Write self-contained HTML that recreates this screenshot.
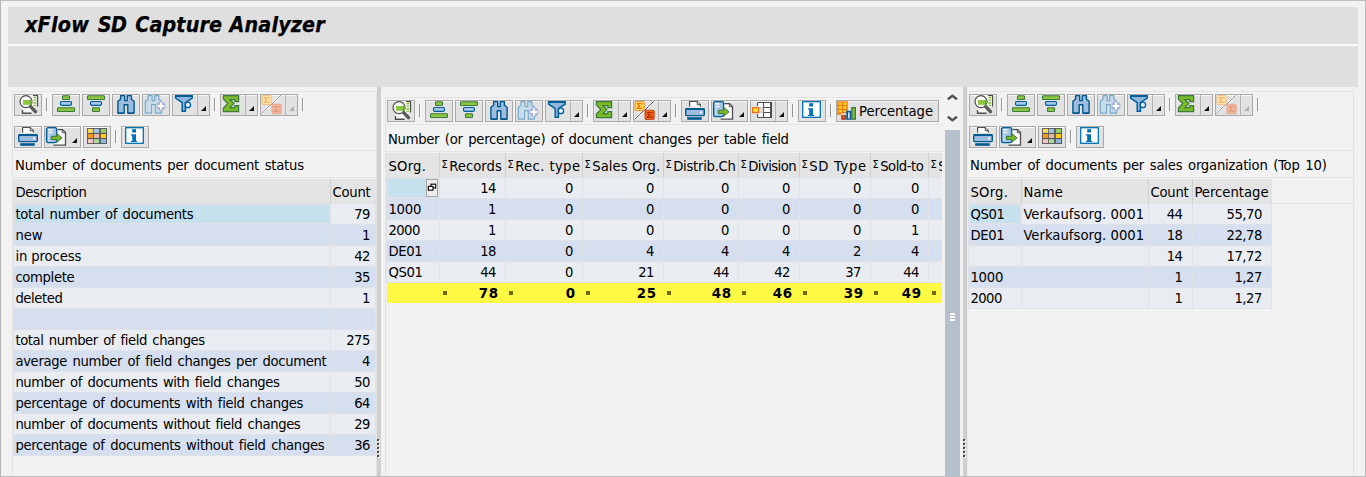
<!DOCTYPE html>
<html lang="en"><head><meta charset="utf-8"><title>xFlow SD Capture Analyzer</title>
<style>
html,body{margin:0;padding:0;background:#f2f2f2;}
body{width:1366px;height:477px;position:relative;overflow:hidden;font-family:"DejaVu Sans Condensed","Liberation Sans",sans-serif;font-size:14.67px;color:#000;}
body>div,body>svg{position:absolute;}
.t{white-space:nowrap;font-size:14.67px;}
.title{font-size:21.33px;font-weight:bold;font-style:italic;-webkit-text-stroke:0.25px #000;}
.btn{background:#e2e2e2;border:1px solid #a9a9a9;box-shadow:inset 0 1px 0 #f8f8f8;}
.sg{font-size:11px;position:absolute;left:1.4px;top:-1px;text-indent:0;letter-spacing:0;}
.b{font-weight:bold;}
.ttl{}
.pct{letter-spacing:-0.2px;}
</style></head><body>
<div style="left:0;top:0;width:1366px;height:477px;background:#f2f2f2"></div>
<div style="left:0px;top:0px;width:1366px;height:1px;background:#bdbdbd;"></div>
<div style="left:0px;top:476px;width:1366px;height:1px;background:#bdbdbd;"></div>
<div style="left:0px;top:0px;width:1px;height:477px;background:#b6b6b6;"></div>
<div style="left:1365px;top:0px;width:1px;height:477px;background:#bbbbbb;"></div>
<div style="left:8px;top:7px;width:1350px;height:37px;background:#dfdfdf;"></div>
<div style="left:8px;top:44px;width:1350px;height:2px;background:#fcfcfc;"></div>
<div style="left:8px;top:46px;width:1350px;height:41px;background:#dfdfdf;"></div>
<div class="t title" style="left:0px;top:10px;width:400px;height:30px;line-height:30px"><span style="position:absolute;left:25.0px;top:0;letter-spacing:0.24px">xFlow</span> <span style="position:absolute;left:97.7px;top:0;letter-spacing:-0.6px">SD</span> <span style="position:absolute;left:135.3px;top:0;letter-spacing:0.1px">Capture</span> <span style="position:absolute;left:229.5px;top:0;letter-spacing:0.15px">Analyzer</span></div>
<div style="left:12px;top:91px;width:365px;height:1px;background:#e3e3e3;"></div>
<div style="left:12px;top:91px;width:1px;height:385px;background:#e3e3e3;"></div>
<div style="left:376px;top:91px;width:1px;height:385px;background:#e3e3e3;"></div>
<div class="btn" style="left:14px;top:94px;width:26px;height:20px"></div>
<svg style="left:14px;top:94px" width="28" height="22" viewBox="0 0 28 22">
<path d="M14,1.5h9.5v11h-6v6.5h-9v-4z" fill="#f7f7f7"/>
<path d="M19,1.5h4.5v11" fill="none" stroke="#4d4d4d" stroke-width="1.2"/>
<rect x="19.5" y="2.6" width="2.6" height="1.8" fill="#8cc63f"/><rect x="19.5" y="5.6" width="2.6" height="1.2" fill="#8cc63f"/><rect x="19.5" y="8" width="2.6" height="1.8" fill="#8cc63f"/><rect x="19.5" y="10.8" width="2.6" height="1.2" fill="#8cc63f"/>
<path d="M8.5,16v3.2h9" fill="none" stroke="#4d4d4d" stroke-width="1.4"/>
<circle cx="12" cy="7.6" r="6" fill="#fff" stroke="#4d4d4d" stroke-width="1.2"/>
<rect x="9" y="6" width="8.6" height="4.8" fill="#8cc63f"/>
<rect x="16" y="6" width="1.6" height="4.8" fill="#6aa83a"/>
<path d="M16.6,12.6l4.9,5" stroke="#5a5a5a" stroke-width="3.4" stroke-linecap="round"/>
</svg>
<div style="left:46px;top:98px;width:1px;height:13px;background:#949494;"></div>
<div style="left:47px;top:98px;width:1px;height:13px;background:#fafafa;"></div>
<div class="btn" style="left:52px;top:94px;width:26px;height:20px"></div>
<svg style="left:52px;top:94px" width="28" height="22" viewBox="0 0 28 22">
<rect x="10.5" y="1.7" width="7" height="3.8" rx="0.8" fill="#8cc63f" stroke="#3a7a3c" stroke-width="1.1"/>
<rect x="8.5" y="7.5" width="11" height="3.8" rx="1.2" fill="#a9c7e6" stroke="#005d96" stroke-width="1.2"/>
<rect x="5.5" y="13.7" width="17" height="3.8" rx="0.8" fill="#8cc63f" stroke="#3a7a3c" stroke-width="1.1"/>
</svg>
<div class="btn" style="left:82px;top:94px;width:26px;height:20px"></div>
<svg style="left:82px;top:94px" width="28" height="22" viewBox="0 0 28 22">
<rect x="5.5" y="1.7" width="17" height="3.8" rx="0.8" fill="#8cc63f" stroke="#3a7a3c" stroke-width="1.1"/>
<rect x="8.5" y="7.5" width="11" height="3.8" rx="1.2" fill="#a9c7e6" stroke="#005d96" stroke-width="1.2"/>
<rect x="10.5" y="13.7" width="7" height="3.8" rx="0.8" fill="#8cc63f" stroke="#3a7a3c" stroke-width="1.1"/>
</svg>
<div class="btn" style="left:112px;top:94px;width:26px;height:20px"></div>
<svg style="left:112px;top:94px" width="28" height="22" viewBox="0 0 28 22"><path d="M8.6,1.6h4.1v5h2.6v-5h4.1v3.6l2.7,2v11.9h-6.3v-8.4h-3.6v8.4h-6.3v-11.9l2.7,-2z" fill="#9cbde0" stroke="#00568c" stroke-width="1.4" stroke-linejoin="round"/><path d="M5.9,19.2h6.3M15.8,19.2h6.3" stroke="#00568c" stroke-width="1.6"/></svg>
<div class="btn" style="left:142px;top:94px;width:26px;height:20px"></div>
<svg style="left:142px;top:94px" width="28" height="22" viewBox="0 0 28 22"><g transform="translate(-2.6,0)"><path d="M8.6,1.6h4.1v5h2.6v-5h4.1v3.6l2.7,2v11.9h-6.3v-8.4h-3.6v8.4h-6.3v-11.9l2.7,-2z" fill="#c7dbeb" stroke="#76aacb" stroke-width="1.2" stroke-linejoin="round"/></g><circle cx="19" cy="12" r="4.6" fill="#a9b3d8"/><path d="M19,8.6v6.8M15.6,12h6.8" stroke="#fff" stroke-width="2"/></svg>
<div class="btn" style="left:172px;top:94px;width:36px;height:20px"></div>
<div style="left:197px;top:95px;width:1px;height:20px;background:#b4b4b4;"></div>
<svg style="left:172px;top:94px" width="28" height="22" viewBox="0 0 28 22">
<path d="M3.6,1.8h16.6v2.4l-6.8,4.4v8.6h-3.2v-8.6l-6.6,-4.4z" fill="#92b6dc" stroke="#00609a" stroke-width="1.5" stroke-linejoin="miter"/>
<path d="M3.4,2h16.6" stroke="#00609a" stroke-width="2"/>
<circle cx="15.9" cy="10.9" r="2.7" fill="#e8eef4" stroke="#00609a" stroke-width="1.3"/>
</svg>
<svg style="left:201px;top:106px" width="5" height="5" viewBox="0 0 5 5"><path d="M5,0V5H0Z" fill="#111"/></svg>
<div style="left:214px;top:98px;width:1px;height:13px;background:#949494;"></div>
<div style="left:215px;top:98px;width:1px;height:13px;background:#fafafa;"></div>
<div class="btn" style="left:220px;top:94px;width:36px;height:20px"></div>
<div style="left:245px;top:95px;width:1px;height:20px;background:#b4b4b4;"></div>
<svg style="left:220px;top:94px" width="28" height="22" viewBox="0 0 28 22"><g transform="translate(3.4,1.6) scale(0.95,1)"><path d="M0,0H16V6H12V4H7L11,8L7,12H12V10H16V16H0V12.5L4.5,8L0,3.5Z" fill="#7ab929" stroke="#3a7a3c" stroke-width="1.3" stroke-linejoin="miter"/></g></svg>
<svg style="left:249px;top:106px" width="5" height="5" viewBox="0 0 5 5"><path d="M5,0V5H0Z" fill="#111"/></svg>
<div class="btn" style="left:260px;top:94px;width:36px;height:20px"></div>
<div style="left:285px;top:95px;width:1px;height:20px;background:#b4b4b4;"></div>
<svg style="left:260px;top:94px" width="28" height="22" viewBox="0 0 28 22"><path d="M1.5,19.5C6,16 7,13 10.5,11S16,5 21,1.2" fill="none" stroke="#fff" stroke-width="2.2"/>
<path d="M1.5,19.5C6,16 7,13 10.5,11S16,5 21,1.2" fill="none" stroke="#777" stroke-width="0.9"/>
<rect x="2" y="1.4" width="9.2" height="9.2" rx="1" fill="#fbe7a0" stroke="#f2b27a" stroke-width="0.8"/>
<g transform="translate(2.1,1.4)"><path d="M1.6,1.6H7.4V3.4H6.4V2.8H3.6L5.6,4.6L3.6,6.4H6.4V5.8H7.4V7.6H1.6V6.6L3.6,4.6L1.6,2.6Z" fill="#f2b27a"/></g>
<rect x="12" y="10.2" width="9.2" height="9.4" rx="1" fill="#f0b9a0" stroke="#e59a80" stroke-width="0.8"/>
<g transform="translate(12.1,10.3)"><path d="M1.6,1.6H7.4V3.4H6.4V2.8H3.6L5.6,4.6L3.6,6.4H6.4V5.8H7.4V7.6H1.6V6.6L3.6,4.6L1.6,2.6Z" fill="#e59a80"/></g></svg>
<svg style="left:289px;top:106px" width="5" height="5" viewBox="0 0 5 5"><path d="M5,0V5H0Z" fill="#b0b0b0"/></svg>
<div style="left:302px;top:98px;width:1px;height:13px;background:#949494;"></div>
<div style="left:303px;top:98px;width:1px;height:13px;background:#fafafa;"></div>
<div class="btn" style="left:14px;top:126px;width:26px;height:20px"></div>
<svg style="left:14px;top:126px" width="28" height="22" viewBox="0 0 28 22">
<path d="M8.6,6.4v-4.9h7.6l3.2,3.2v1.7" fill="#fff" stroke="#4d4d4d" stroke-width="1.2"/>
<path d="M16.2,1.5v3.2h3.2" fill="#ddd" stroke="#4d4d4d" stroke-width="1"/>
<rect x="4.7" y="8.6" width="18.6" height="7" rx="1.2" fill="#9dbcdd" stroke="#005a8f" stroke-width="1.4"/>
<rect x="4.7" y="8" width="18.6" height="2" fill="#005a8f"/>
<rect x="19.2" y="11.4" width="2" height="2" fill="#fff"/>
<rect x="6.2" y="17.2" width="14.6" height="2.6" fill="#005a8f"/>
</svg>
<div class="btn" style="left:44px;top:126px;width:35px;height:20px"></div>
<svg style="left:44px;top:126px" width="28" height="22" viewBox="0 0 28 22">
<path d="M13.5,3.6h5l3,3v12.6h-12" fill="#fff" stroke="#4d4d4d" stroke-width="1.3"/>
<path d="M18.3,3.6v3.2h3.2" fill="none" stroke="#4d4d4d" stroke-width="1"/>
<rect x="2.6" y="1.6" width="10" height="15" rx="1.5" fill="#a6c4e4" stroke="#00609a" stroke-width="1.4"/>
<rect x="4" y="3.2" width="4.4" height="1.4" fill="#fff"/><rect x="4" y="6" width="4.4" height="1.2" fill="#fff"/>
<rect x="4" y="8" width="1.6" height="7.6" fill="#c6d9ee"/>
<path d="M7.4,10.3h5.4v-2.8l5.2,4.4l-5.2,4.4v-2.8h-5.4z" fill="#7ab929" stroke="#3a7a3c" stroke-width="1"/>
</svg>
<svg style="left:72px;top:138px" width="5" height="5" viewBox="0 0 5 5"><path d="M5,0V5H0Z" fill="#111"/></svg>
<div class="btn" style="left:83px;top:126px;width:26px;height:20px"></div>
<svg style="left:83px;top:126px" width="28" height="22" viewBox="0 0 28 22"><rect x="4" y="2" width="20" height="16" rx="0.6" fill="#565656"/><rect x="4.9" y="2.9" width="5.2" height="4" fill="#ffd95a"/><rect x="10.9" y="2.9" width="5.2" height="4" fill="#a3c4e6"/><rect x="17.8" y="2.9" width="5.2" height="4" fill="#9bcf63"/><rect x="4.9" y="8" width="5.2" height="4" fill="#f39a1e"/><rect x="10.9" y="8" width="5.2" height="4" fill="#e3b8a8"/><rect x="17.8" y="8" width="5.2" height="4" fill="#ffcc12"/><rect x="4.9" y="13.1" width="5.2" height="4" fill="#f7c6c6"/><rect x="10.9" y="13.1" width="5.2" height="4" fill="#acd89c"/><rect x="17.8" y="13.1" width="5.2" height="4" fill="#8fb8e0"/></svg>
<div style="left:115px;top:130px;width:1px;height:13px;background:#949494;"></div>
<div style="left:116px;top:130px;width:1px;height:13px;background:#fafafa;"></div>
<div class="btn" style="left:121px;top:126px;width:26px;height:20px"></div>
<svg style="left:121px;top:126px" width="28" height="22" viewBox="0 0 28 22">
<rect x="4.7" y="1.7" width="17.6" height="15.6" fill="#fff" stroke="#0070b8" stroke-width="1.3"/>
<rect x="11.2" y="3.2" width="3.8" height="3.3" fill="#0070b8"/>
<path d="M9.9,8.2h5.1v6.8h1.2v1.1h-6.3v-1.1h1.3v-5.6h-1.3z" fill="#0070b8"/>
</svg>
<div style="left:13px;top:150px;width:363px;height:1px;background:#e3e3e3;"></div>
<div style="left:13px;top:177px;width:363px;height:1px;background:#e3e3e3;"></div>
<div class="t ttl" style="left:15px;top:153px;width:360px;height:23px;line-height:23px;letter-spacing:-0.221px;word-spacing:1.7px;">Number of documents per document status</div>
<div style="left:377px;top:87px;width:4px;height:389px;background:#cfcfcf;"></div>
<div style="left:378px;top:440px;width:2px;height:2px;background:#ffffff;"></div>
<div style="left:377px;top:439px;width:2px;height:2px;background:#4a4a4a;"></div>
<div style="left:378px;top:444px;width:2px;height:2px;background:#ffffff;"></div>
<div style="left:377px;top:443px;width:2px;height:2px;background:#4a4a4a;"></div>
<div style="left:378px;top:448px;width:2px;height:2px;background:#ffffff;"></div>
<div style="left:377px;top:447px;width:2px;height:2px;background:#4a4a4a;"></div>
<div style="left:378px;top:452px;width:2px;height:2px;background:#ffffff;"></div>
<div style="left:377px;top:451px;width:2px;height:2px;background:#4a4a4a;"></div>
<div style="left:378px;top:456px;width:2px;height:2px;background:#ffffff;"></div>
<div style="left:377px;top:455px;width:2px;height:2px;background:#4a4a4a;"></div>
<div style="left:963px;top:87px;width:4px;height:389px;background:#cfcfcf;"></div>
<div style="left:964px;top:440px;width:2px;height:2px;background:#ffffff;"></div>
<div style="left:963px;top:439px;width:2px;height:2px;background:#4a4a4a;"></div>
<div style="left:964px;top:444px;width:2px;height:2px;background:#ffffff;"></div>
<div style="left:963px;top:443px;width:2px;height:2px;background:#4a4a4a;"></div>
<div style="left:964px;top:448px;width:2px;height:2px;background:#ffffff;"></div>
<div style="left:963px;top:447px;width:2px;height:2px;background:#4a4a4a;"></div>
<div style="left:964px;top:452px;width:2px;height:2px;background:#ffffff;"></div>
<div style="left:963px;top:451px;width:2px;height:2px;background:#4a4a4a;"></div>
<div style="left:964px;top:456px;width:2px;height:2px;background:#ffffff;"></div>
<div style="left:963px;top:455px;width:2px;height:2px;background:#4a4a4a;"></div>
<div style="left:13px;top:179px;width:363px;height:24px;background:#e4e4e4;"></div>
<div class="t " style="left:15.4px;top:179px;width:314px;height:24px;line-height:24px;line-height:25px;overflow:hidden;letter-spacing:-0.364px;">Description</div>
<div style="left:330px;top:179px;width:1px;height:24px;background:#cfcfcf;"></div>
<div class="t " style="left:332.4px;top:179px;width:42px;height:24px;line-height:24px;line-height:25px;overflow:hidden;letter-spacing:-0.198px;">Count</div>
<div style="left:13px;top:203px;width:363px;height:253px;background:#dee1e5;"></div>
<div style="left:15px;top:205px;width:314px;height:18px;background:#c6e0ee;"></div>
<div class="t " style="left:15.4px;top:204px;width:314px;height:20px;line-height:20px;overflow:hidden;letter-spacing:-0.3px;word-spacing:1.7px;">total number of documents</div>
<div style="left:331px;top:204px;width:44px;height:20px;background:#e9ecf0;"></div>
<div class="t " style="left:331px;top:204px;width:39px;height:20px;line-height:20px;text-align:right;overflow:hidden;letter-spacing:-0.45px;">79</div>
<div style="left:14px;top:225px;width:316px;height:20px;background:#d5dfef;"></div>
<div class="t " style="left:15.4px;top:225px;width:314px;height:20px;line-height:20px;overflow:hidden;letter-spacing:-0.087px;">new</div>
<div style="left:331px;top:225px;width:44px;height:20px;background:#d5dfef;"></div>
<div class="t " style="left:331px;top:225px;width:39px;height:20px;line-height:20px;text-align:right;overflow:hidden;letter-spacing:-0.45px;">1</div>
<div style="left:14px;top:246px;width:316px;height:20px;background:#e9ecf0;"></div>
<div class="t " style="left:15.4px;top:246px;width:314px;height:20px;line-height:20px;overflow:hidden;letter-spacing:-0.097px;">in process</div>
<div style="left:331px;top:246px;width:44px;height:20px;background:#e9ecf0;"></div>
<div class="t " style="left:331px;top:246px;width:39px;height:20px;line-height:20px;text-align:right;overflow:hidden;letter-spacing:-0.45px;">42</div>
<div style="left:14px;top:267px;width:316px;height:20px;background:#d5dfef;"></div>
<div class="t " style="left:15.4px;top:267px;width:314px;height:20px;line-height:20px;overflow:hidden;letter-spacing:-0.34px;">complete</div>
<div style="left:331px;top:267px;width:44px;height:20px;background:#d5dfef;"></div>
<div class="t " style="left:331px;top:267px;width:39px;height:20px;line-height:20px;text-align:right;overflow:hidden;letter-spacing:-0.45px;">35</div>
<div style="left:14px;top:288px;width:316px;height:20px;background:#e9ecf0;"></div>
<div class="t " style="left:15.4px;top:288px;width:314px;height:20px;line-height:20px;overflow:hidden;letter-spacing:-0.408px;">deleted</div>
<div style="left:331px;top:288px;width:44px;height:20px;background:#e9ecf0;"></div>
<div class="t " style="left:331px;top:288px;width:39px;height:20px;line-height:20px;text-align:right;overflow:hidden;letter-spacing:-0.45px;">1</div>
<div style="left:14px;top:309px;width:316px;height:20px;background:#d5dfef;"></div>
<div style="left:331px;top:309px;width:44px;height:20px;background:#d5dfef;"></div>
<div style="left:14px;top:330px;width:316px;height:20px;background:#e9ecf0;"></div>
<div class="t " style="left:15.4px;top:330px;width:314px;height:20px;line-height:20px;overflow:hidden;letter-spacing:-0.427px;word-spacing:1.7px;">total number of field changes</div>
<div style="left:331px;top:330px;width:44px;height:20px;background:#e9ecf0;"></div>
<div class="t " style="left:331px;top:330px;width:39px;height:20px;line-height:20px;text-align:right;overflow:hidden;letter-spacing:-0.45px;">275</div>
<div style="left:14px;top:351px;width:316px;height:20px;background:#d5dfef;"></div>
<div class="t " style="left:15.4px;top:351px;width:314px;height:20px;line-height:20px;overflow:hidden;letter-spacing:-0.335px;word-spacing:1.7px;">average number of field changes per document</div>
<div style="left:331px;top:351px;width:44px;height:20px;background:#d5dfef;"></div>
<div class="t " style="left:331px;top:351px;width:39px;height:20px;line-height:20px;text-align:right;overflow:hidden;letter-spacing:-0.45px;">4</div>
<div style="left:14px;top:372px;width:316px;height:20px;background:#e9ecf0;"></div>
<div class="t " style="left:15.4px;top:372px;width:314px;height:20px;line-height:20px;overflow:hidden;letter-spacing:-0.386px;word-spacing:1.7px;">number of documents with field changes</div>
<div style="left:331px;top:372px;width:44px;height:20px;background:#e9ecf0;"></div>
<div class="t " style="left:331px;top:372px;width:39px;height:20px;line-height:20px;text-align:right;overflow:hidden;letter-spacing:-0.45px;">50</div>
<div style="left:14px;top:393px;width:316px;height:20px;background:#d5dfef;"></div>
<div class="t " style="left:15.4px;top:393px;width:314px;height:20px;line-height:20px;overflow:hidden;letter-spacing:-0.352px;word-spacing:1.7px;">percentage of documents with field changes</div>
<div style="left:331px;top:393px;width:44px;height:20px;background:#d5dfef;"></div>
<div class="t " style="left:331px;top:393px;width:39px;height:20px;line-height:20px;text-align:right;overflow:hidden;letter-spacing:-0.45px;">64</div>
<div style="left:14px;top:414px;width:316px;height:20px;background:#e9ecf0;"></div>
<div class="t " style="left:15.4px;top:414px;width:314px;height:20px;line-height:20px;overflow:hidden;letter-spacing:-0.377px;word-spacing:1.7px;">number of documents without field changes</div>
<div style="left:331px;top:414px;width:44px;height:20px;background:#e9ecf0;"></div>
<div class="t " style="left:331px;top:414px;width:39px;height:20px;line-height:20px;text-align:right;overflow:hidden;letter-spacing:-0.45px;">29</div>
<div style="left:14px;top:435px;width:316px;height:20px;background:#d5dfef;"></div>
<div class="t " style="left:15.4px;top:435px;width:314px;height:20px;line-height:20px;overflow:hidden;letter-spacing:-0.337px;word-spacing:1.7px;">percentage of documents without field changes</div>
<div style="left:331px;top:435px;width:44px;height:20px;background:#d5dfef;"></div>
<div class="t " style="left:331px;top:435px;width:39px;height:20px;line-height:20px;text-align:right;overflow:hidden;letter-spacing:-0.45px;">36</div>
<div style="left:385px;top:97px;width:557px;height:1px;background:#e3e3e3;"></div>
<div style="left:385px;top:97px;width:1px;height:379px;background:#e3e3e3;"></div>
<div class="btn" style="left:387px;top:100px;width:26px;height:20px"></div>
<svg style="left:387px;top:100px" width="28" height="22" viewBox="0 0 28 22">
<path d="M14,1.5h9.5v11h-6v6.5h-9v-4z" fill="#f7f7f7"/>
<path d="M19,1.5h4.5v11" fill="none" stroke="#4d4d4d" stroke-width="1.2"/>
<rect x="19.5" y="2.6" width="2.6" height="1.8" fill="#8cc63f"/><rect x="19.5" y="5.6" width="2.6" height="1.2" fill="#8cc63f"/><rect x="19.5" y="8" width="2.6" height="1.8" fill="#8cc63f"/><rect x="19.5" y="10.8" width="2.6" height="1.2" fill="#8cc63f"/>
<path d="M8.5,16v3.2h9" fill="none" stroke="#4d4d4d" stroke-width="1.4"/>
<circle cx="12" cy="7.6" r="6" fill="#fff" stroke="#4d4d4d" stroke-width="1.2"/>
<rect x="9" y="6" width="8.6" height="4.8" fill="#8cc63f"/>
<rect x="16" y="6" width="1.6" height="4.8" fill="#6aa83a"/>
<path d="M16.6,12.6l4.9,5" stroke="#5a5a5a" stroke-width="3.4" stroke-linecap="round"/>
</svg>
<div style="left:419px;top:104px;width:1px;height:13px;background:#949494;"></div>
<div style="left:420px;top:104px;width:1px;height:13px;background:#fafafa;"></div>
<div class="btn" style="left:425px;top:100px;width:26px;height:20px"></div>
<svg style="left:425px;top:100px" width="28" height="22" viewBox="0 0 28 22">
<rect x="10.5" y="1.7" width="7" height="3.8" rx="0.8" fill="#8cc63f" stroke="#3a7a3c" stroke-width="1.1"/>
<rect x="8.5" y="7.5" width="11" height="3.8" rx="1.2" fill="#a9c7e6" stroke="#005d96" stroke-width="1.2"/>
<rect x="5.5" y="13.7" width="17" height="3.8" rx="0.8" fill="#8cc63f" stroke="#3a7a3c" stroke-width="1.1"/>
</svg>
<div class="btn" style="left:455px;top:100px;width:26px;height:20px"></div>
<svg style="left:455px;top:100px" width="28" height="22" viewBox="0 0 28 22">
<rect x="5.5" y="1.7" width="17" height="3.8" rx="0.8" fill="#8cc63f" stroke="#3a7a3c" stroke-width="1.1"/>
<rect x="8.5" y="7.5" width="11" height="3.8" rx="1.2" fill="#a9c7e6" stroke="#005d96" stroke-width="1.2"/>
<rect x="10.5" y="13.7" width="7" height="3.8" rx="0.8" fill="#8cc63f" stroke="#3a7a3c" stroke-width="1.1"/>
</svg>
<div class="btn" style="left:485px;top:100px;width:26px;height:20px"></div>
<svg style="left:485px;top:100px" width="28" height="22" viewBox="0 0 28 22"><path d="M8.6,1.6h4.1v5h2.6v-5h4.1v3.6l2.7,2v11.9h-6.3v-8.4h-3.6v8.4h-6.3v-11.9l2.7,-2z" fill="#9cbde0" stroke="#00568c" stroke-width="1.4" stroke-linejoin="round"/><path d="M5.9,19.2h6.3M15.8,19.2h6.3" stroke="#00568c" stroke-width="1.6"/></svg>
<div class="btn" style="left:515px;top:100px;width:26px;height:20px"></div>
<svg style="left:515px;top:100px" width="28" height="22" viewBox="0 0 28 22"><g transform="translate(-2.6,0)"><path d="M8.6,1.6h4.1v5h2.6v-5h4.1v3.6l2.7,2v11.9h-6.3v-8.4h-3.6v8.4h-6.3v-11.9l2.7,-2z" fill="#c7dbeb" stroke="#76aacb" stroke-width="1.2" stroke-linejoin="round"/></g><circle cx="19" cy="12" r="4.6" fill="#a9b3d8"/><path d="M19,8.6v6.8M15.6,12h6.8" stroke="#fff" stroke-width="2"/></svg>
<div class="btn" style="left:545px;top:100px;width:36px;height:20px"></div>
<div style="left:570px;top:101px;width:1px;height:20px;background:#b4b4b4;"></div>
<svg style="left:545px;top:100px" width="28" height="22" viewBox="0 0 28 22">
<path d="M3.6,1.8h16.6v2.4l-6.8,4.4v8.6h-3.2v-8.6l-6.6,-4.4z" fill="#92b6dc" stroke="#00609a" stroke-width="1.5" stroke-linejoin="miter"/>
<path d="M3.4,2h16.6" stroke="#00609a" stroke-width="2"/>
<circle cx="15.9" cy="10.9" r="2.7" fill="#e8eef4" stroke="#00609a" stroke-width="1.3"/>
</svg>
<svg style="left:574px;top:112px" width="5" height="5" viewBox="0 0 5 5"><path d="M5,0V5H0Z" fill="#111"/></svg>
<div style="left:587px;top:104px;width:1px;height:13px;background:#949494;"></div>
<div style="left:588px;top:104px;width:1px;height:13px;background:#fafafa;"></div>
<div class="btn" style="left:593px;top:100px;width:36px;height:20px"></div>
<div style="left:618px;top:101px;width:1px;height:20px;background:#b4b4b4;"></div>
<svg style="left:593px;top:100px" width="28" height="22" viewBox="0 0 28 22"><g transform="translate(3.4,1.6) scale(0.95,1)"><path d="M0,0H16V6H12V4H7L11,8L7,12H12V10H16V16H0V12.5L4.5,8L0,3.5Z" fill="#7ab929" stroke="#3a7a3c" stroke-width="1.3" stroke-linejoin="miter"/></g></svg>
<svg style="left:622px;top:112px" width="5" height="5" viewBox="0 0 5 5"><path d="M5,0V5H0Z" fill="#111"/></svg>
<div class="btn" style="left:633px;top:100px;width:36px;height:20px"></div>
<div style="left:658px;top:101px;width:1px;height:20px;background:#b4b4b4;"></div>
<svg style="left:633px;top:100px" width="28" height="22" viewBox="0 0 28 22"><path d="M1.5,19.5C6,16 7,13 10.5,11S16,5 21,1.2" fill="none" stroke="#fff" stroke-width="2.2"/>
<path d="M1.5,19.5C6,16 7,13 10.5,11S16,5 21,1.2" fill="none" stroke="#333" stroke-width="0.9"/>
<rect x="2" y="1.4" width="9.2" height="9.2" rx="1" fill="#ffe14d" stroke="#e8731a" stroke-width="0.8"/>
<g transform="translate(2.1,1.4)"><path d="M1.6,1.6H7.4V3.4H6.4V2.8H3.6L5.6,4.6L3.6,6.4H6.4V5.8H7.4V7.6H1.6V6.6L3.6,4.6L1.6,2.6Z" fill="#e8731a"/></g>
<rect x="12" y="10.2" width="9.2" height="9.4" rx="1" fill="#e8651a" stroke="#c22f00" stroke-width="0.8"/>
<g transform="translate(12.1,10.3)"><path d="M1.6,1.6H7.4V3.4H6.4V2.8H3.6L5.6,4.6L3.6,6.4H6.4V5.8H7.4V7.6H1.6V6.6L3.6,4.6L1.6,2.6Z" fill="#c22f00"/></g></svg>
<svg style="left:662px;top:112px" width="5" height="5" viewBox="0 0 5 5"><path d="M5,0V5H0Z" fill="#111"/></svg>
<div style="left:675px;top:104px;width:1px;height:13px;background:#949494;"></div>
<div style="left:676px;top:104px;width:1px;height:13px;background:#fafafa;"></div>
<div class="btn" style="left:681px;top:100px;width:26px;height:20px"></div>
<svg style="left:681px;top:100px" width="28" height="22" viewBox="0 0 28 22">
<path d="M8.6,6.4v-4.9h7.6l3.2,3.2v1.7" fill="#fff" stroke="#4d4d4d" stroke-width="1.2"/>
<path d="M16.2,1.5v3.2h3.2" fill="#ddd" stroke="#4d4d4d" stroke-width="1"/>
<rect x="4.7" y="8.6" width="18.6" height="7" rx="1.2" fill="#9dbcdd" stroke="#005a8f" stroke-width="1.4"/>
<rect x="4.7" y="8" width="18.6" height="2" fill="#005a8f"/>
<rect x="19.2" y="11.4" width="2" height="2" fill="#fff"/>
<rect x="6.2" y="17.2" width="14.6" height="2.6" fill="#005a8f"/>
</svg>
<div class="btn" style="left:711px;top:100px;width:35px;height:20px"></div>
<svg style="left:711px;top:100px" width="28" height="22" viewBox="0 0 28 22">
<path d="M13.5,3.6h5l3,3v12.6h-12" fill="#fff" stroke="#4d4d4d" stroke-width="1.3"/>
<path d="M18.3,3.6v3.2h3.2" fill="none" stroke="#4d4d4d" stroke-width="1"/>
<rect x="2.6" y="1.6" width="10" height="15" rx="1.5" fill="#a6c4e4" stroke="#00609a" stroke-width="1.4"/>
<rect x="4" y="3.2" width="4.4" height="1.4" fill="#fff"/><rect x="4" y="6" width="4.4" height="1.2" fill="#fff"/>
<rect x="4" y="8" width="1.6" height="7.6" fill="#c6d9ee"/>
<path d="M7.4,10.3h5.4v-2.8l5.2,4.4l-5.2,4.4v-2.8h-5.4z" fill="#7ab929" stroke="#3a7a3c" stroke-width="1"/>
</svg>
<svg style="left:739px;top:112px" width="5" height="5" viewBox="0 0 5 5"><path d="M5,0V5H0Z" fill="#111"/></svg>
<div class="btn" style="left:750px;top:100px;width:36px;height:20px"></div>
<div style="left:775px;top:101px;width:1px;height:20px;background:#b4b4b4;"></div>
<svg style="left:750px;top:100px" width="28" height="22" viewBox="0 0 28 22">
<rect x="7.5" y="2.4" width="14" height="15.2" fill="#fff"/>
<path d="M7.6,2.5h13M7.6,17.5h13M13.5,2.5v15M13.5,7.5h7M13.5,12.5h7" stroke="#4d4d4d" stroke-width="1.1" fill="none"/>
<path d="M7.6,2.5v3.6M7.6,14v3.5" stroke="#4d4d4d" stroke-width="1.1"/>
<path d="M21,2v16" stroke="#4d4d4d" stroke-width="2"/>
<rect x="9.2" y="7.8" width="4" height="4.6" fill="#dcdcdc"/><path d="M8.4,7.5h5M8.4,12.5h5" stroke="#c4c4c4" stroke-width="0.9"/>
<rect x="2.6" y="7.6" width="6" height="5" fill="#ffd633" stroke="#e8731a" stroke-width="1.3"/>
</svg>
<svg style="left:779px;top:112px" width="5" height="5" viewBox="0 0 5 5"><path d="M5,0V5H0Z" fill="#111"/></svg>
<div style="left:792px;top:104px;width:1px;height:13px;background:#949494;"></div>
<div style="left:793px;top:104px;width:1px;height:13px;background:#fafafa;"></div>
<div class="btn" style="left:798px;top:100px;width:26px;height:20px"></div>
<svg style="left:798px;top:100px" width="28" height="22" viewBox="0 0 28 22">
<rect x="4.7" y="1.7" width="17.6" height="15.6" fill="#fff" stroke="#0070b8" stroke-width="1.3"/>
<rect x="11.2" y="3.2" width="3.8" height="3.3" fill="#0070b8"/>
<path d="M9.9,8.2h5.1v6.8h1.2v1.1h-6.3v-1.1h1.3v-5.6h-1.3z" fill="#0070b8"/>
</svg>
<div style="left:830px;top:104px;width:1px;height:13px;background:#949494;"></div>
<div style="left:831px;top:104px;width:1px;height:13px;background:#fafafa;"></div>
<div class="btn" style="left:836px;top:100px;width:101px;height:20px"></div>
<svg style="left:836px;top:100px" width="28" height="22" viewBox="0 0 28 22">
<path d="M1.2,1.2h10.6v10l-2,2h-4.4v1.6h-4.2z" fill="#ec7a12"/>
<g fill="#ffd21a"><rect x="2.6" y="2.4" width="3.4" height="2.6"/><rect x="7.2" y="2.4" width="3.4" height="2.6"/><rect x="2.6" y="6.2" width="3.4" height="2.6"/><rect x="7.2" y="6.2" width="3.4" height="2.6"/><rect x="2.6" y="10" width="3.4" height="2.4"/><rect x="7.2" y="10" width="2.6" height="2"/></g>
<rect x="5.2" y="15" width="5" height="4.8" fill="#c23a16"/><rect x="6.6" y="16.3" width="1.8" height="1.8" fill="#e8731a"/>
<rect x="10.2" y="10.8" width="5.3" height="9" fill="#0c5c9c"/><rect x="12" y="12.4" width="1.7" height="6" fill="#cfe0f2"/>
<rect x="15.2" y="7" width="4.8" height="12.8" fill="#3a7a3c"/><rect x="16.6" y="8.4" width="2" height="10" fill="#8cc63f"/>
</svg>
<div class="t pct" style="left:859px;top:100px;width:78px;height:22px;line-height:22px;letter-spacing:0.002px;">Percentage</div>
<div style="left:386px;top:124px;width:556px;height:1px;background:#e3e3e3;"></div>
<div style="left:386px;top:151px;width:556px;height:1px;background:#e3e3e3;"></div>
<div class="t ttl" style="left:388px;top:127px;width:550px;height:23px;line-height:23px;letter-spacing:-0.286px;word-spacing:1.7px;">Number (or percentage) of document changes per table field</div>
<svg style="left:945px;top:92px" width="16" height="32" viewBox="0 0 16 32"><path d="M2.8,7.2L7.4,3.8L12,7.2M2.8,24.8L7.4,28.2L12,24.8" fill="none" stroke="#555" stroke-width="2.6"/></svg>
<div style="left:945px;top:130px;width:15px;height:346px;background:#b5c0cc;"></div>
<div style="left:950px;top:313px;width:5px;height:2px;background:#fff;"></div>
<div style="left:950px;top:316px;width:5px;height:2px;background:#fff;"></div>
<div style="left:950px;top:319px;width:5px;height:2px;background:#fff;"></div>
<div style="left:386px;top:153px;width:556px;height:24px;background:#e4e4e4;"></div>
<div class="t " style="left:388.4px;top:153px;width:50px;height:24px;line-height:24px;line-height:25px;overflow:hidden;letter-spacing:0.254px;">SOrg.</div>
<div style="left:439px;top:153px;width:1px;height:24px;background:#cfcfcf;"></div>
<div class="t" style="left:440px;top:153px;width:65px;height:24px;line-height:25px;overflow:hidden;letter-spacing:0.056px;text-indent:9.2px"><span class="sg">&Sigma;</span>Records</div>
<div style="left:505px;top:153px;width:1px;height:24px;background:#cfcfcf;"></div>
<div class="t" style="left:506px;top:153px;width:76px;height:24px;line-height:25px;overflow:hidden;letter-spacing:0.39px;text-indent:9.2px"><span class="sg">&Sigma;</span>Rec. type</div>
<div style="left:582px;top:153px;width:1px;height:24px;background:#cfcfcf;"></div>
<div class="t" style="left:583px;top:153px;width:80px;height:24px;line-height:25px;overflow:hidden;letter-spacing:0.067px;text-indent:9.2px"><span class="sg">&Sigma;</span>Sales Org.</div>
<div style="left:663px;top:153px;width:1px;height:24px;background:#cfcfcf;"></div>
<div class="t" style="left:664px;top:153px;width:74px;height:24px;line-height:25px;overflow:hidden;letter-spacing:-0.267px;text-indent:9.2px"><span class="sg">&Sigma;</span>Distrib.Ch</div>
<div style="left:738px;top:153px;width:1px;height:24px;background:#cfcfcf;"></div>
<div class="t" style="left:739px;top:153px;width:60px;height:24px;line-height:25px;overflow:hidden;letter-spacing:-0.555px;text-indent:9.2px"><span class="sg">&Sigma;</span>Division</div>
<div style="left:799px;top:153px;width:1px;height:24px;background:#cfcfcf;"></div>
<div class="t" style="left:800px;top:153px;width:70px;height:24px;line-height:25px;overflow:hidden;letter-spacing:0.691px;text-indent:9.2px"><span class="sg">&Sigma;</span>SD Type</div>
<div style="left:870px;top:153px;width:1px;height:24px;background:#cfcfcf;"></div>
<div class="t" style="left:871px;top:153px;width:57px;height:24px;line-height:25px;overflow:hidden;letter-spacing:-0.484px;text-indent:9.2px"><span class="sg">&Sigma;</span>Sold-to</div>
<div style="left:928px;top:153px;width:1px;height:24px;background:#cfcfcf;"></div>
<div class="t" style="left:929px;top:153px;width:13px;height:24px;line-height:25px;overflow:hidden;letter-spacing:0px;text-indent:9.2px"><span class="sg">&Sigma;</span>S</div>
<div style="left:386px;top:177px;width:556px;height:106px;background:#dee1e5;"></div>
<div style="left:388px;top:179px;width:50px;height:18px;background:#c6e0ee;"></div>
<div style="left:440px;top:178px;width:65px;height:20px;background:#e9ecf0;"></div>
<div class="t " style="left:440px;top:178px;width:56px;height:20px;line-height:20px;text-align:right;overflow:hidden;letter-spacing:-0.45px;">14</div>
<div style="left:506px;top:178px;width:76px;height:20px;background:#e9ecf0;"></div>
<div class="t " style="left:506px;top:178px;width:67px;height:20px;line-height:20px;text-align:right;overflow:hidden;letter-spacing:-0.45px;">0</div>
<div style="left:583px;top:178px;width:80px;height:20px;background:#e9ecf0;"></div>
<div class="t " style="left:583px;top:178px;width:71px;height:20px;line-height:20px;text-align:right;overflow:hidden;letter-spacing:-0.45px;">0</div>
<div style="left:664px;top:178px;width:74px;height:20px;background:#e9ecf0;"></div>
<div class="t " style="left:664px;top:178px;width:65px;height:20px;line-height:20px;text-align:right;overflow:hidden;letter-spacing:-0.45px;">0</div>
<div style="left:739px;top:178px;width:60px;height:20px;background:#e9ecf0;"></div>
<div class="t " style="left:739px;top:178px;width:51px;height:20px;line-height:20px;text-align:right;overflow:hidden;letter-spacing:-0.45px;">0</div>
<div style="left:800px;top:178px;width:70px;height:20px;background:#e9ecf0;"></div>
<div class="t " style="left:800px;top:178px;width:61px;height:20px;line-height:20px;text-align:right;overflow:hidden;letter-spacing:-0.45px;">0</div>
<div style="left:871px;top:178px;width:57px;height:20px;background:#e9ecf0;"></div>
<div class="t " style="left:871px;top:178px;width:48px;height:20px;line-height:20px;text-align:right;overflow:hidden;letter-spacing:-0.45px;">0</div>
<div style="left:929px;top:178px;width:13px;height:20px;background:#e9ecf0;"></div>
<div style="left:387px;top:199px;width:52px;height:20px;background:#d5dfef;"></div>
<div class="t " style="left:388.4px;top:199px;width:50px;height:20px;line-height:20px;overflow:hidden;letter-spacing:-0.221px;">1000</div>
<div style="left:440px;top:199px;width:65px;height:20px;background:#d5dfef;"></div>
<div class="t " style="left:440px;top:199px;width:56px;height:20px;line-height:20px;text-align:right;overflow:hidden;letter-spacing:-0.45px;">1</div>
<div style="left:506px;top:199px;width:76px;height:20px;background:#d5dfef;"></div>
<div class="t " style="left:506px;top:199px;width:67px;height:20px;line-height:20px;text-align:right;overflow:hidden;letter-spacing:-0.45px;">0</div>
<div style="left:583px;top:199px;width:80px;height:20px;background:#d5dfef;"></div>
<div class="t " style="left:583px;top:199px;width:71px;height:20px;line-height:20px;text-align:right;overflow:hidden;letter-spacing:-0.45px;">0</div>
<div style="left:664px;top:199px;width:74px;height:20px;background:#d5dfef;"></div>
<div class="t " style="left:664px;top:199px;width:65px;height:20px;line-height:20px;text-align:right;overflow:hidden;letter-spacing:-0.45px;">0</div>
<div style="left:739px;top:199px;width:60px;height:20px;background:#d5dfef;"></div>
<div class="t " style="left:739px;top:199px;width:51px;height:20px;line-height:20px;text-align:right;overflow:hidden;letter-spacing:-0.45px;">0</div>
<div style="left:800px;top:199px;width:70px;height:20px;background:#d5dfef;"></div>
<div class="t " style="left:800px;top:199px;width:61px;height:20px;line-height:20px;text-align:right;overflow:hidden;letter-spacing:-0.45px;">0</div>
<div style="left:871px;top:199px;width:57px;height:20px;background:#d5dfef;"></div>
<div class="t " style="left:871px;top:199px;width:48px;height:20px;line-height:20px;text-align:right;overflow:hidden;letter-spacing:-0.45px;">0</div>
<div style="left:929px;top:199px;width:13px;height:20px;background:#d5dfef;"></div>
<div style="left:387px;top:220px;width:52px;height:20px;background:#e9ecf0;"></div>
<div class="t " style="left:388.4px;top:220px;width:50px;height:20px;line-height:20px;overflow:hidden;letter-spacing:-0.554px;">2000</div>
<div style="left:440px;top:220px;width:65px;height:20px;background:#e9ecf0;"></div>
<div class="t " style="left:440px;top:220px;width:56px;height:20px;line-height:20px;text-align:right;overflow:hidden;letter-spacing:-0.45px;">1</div>
<div style="left:506px;top:220px;width:76px;height:20px;background:#e9ecf0;"></div>
<div class="t " style="left:506px;top:220px;width:67px;height:20px;line-height:20px;text-align:right;overflow:hidden;letter-spacing:-0.45px;">0</div>
<div style="left:583px;top:220px;width:80px;height:20px;background:#e9ecf0;"></div>
<div class="t " style="left:583px;top:220px;width:71px;height:20px;line-height:20px;text-align:right;overflow:hidden;letter-spacing:-0.45px;">0</div>
<div style="left:664px;top:220px;width:74px;height:20px;background:#e9ecf0;"></div>
<div class="t " style="left:664px;top:220px;width:65px;height:20px;line-height:20px;text-align:right;overflow:hidden;letter-spacing:-0.45px;">0</div>
<div style="left:739px;top:220px;width:60px;height:20px;background:#e9ecf0;"></div>
<div class="t " style="left:739px;top:220px;width:51px;height:20px;line-height:20px;text-align:right;overflow:hidden;letter-spacing:-0.45px;">0</div>
<div style="left:800px;top:220px;width:70px;height:20px;background:#e9ecf0;"></div>
<div class="t " style="left:800px;top:220px;width:61px;height:20px;line-height:20px;text-align:right;overflow:hidden;letter-spacing:-0.45px;">0</div>
<div style="left:871px;top:220px;width:57px;height:20px;background:#e9ecf0;"></div>
<div class="t " style="left:871px;top:220px;width:48px;height:20px;line-height:20px;text-align:right;overflow:hidden;letter-spacing:-0.45px;">1</div>
<div style="left:929px;top:220px;width:13px;height:20px;background:#e9ecf0;"></div>
<div style="left:387px;top:241px;width:52px;height:20px;background:#d5dfef;"></div>
<div class="t " style="left:388.4px;top:241px;width:50px;height:20px;line-height:20px;overflow:hidden;letter-spacing:-0.324px;">DE01</div>
<div style="left:440px;top:241px;width:65px;height:20px;background:#d5dfef;"></div>
<div class="t " style="left:440px;top:241px;width:56px;height:20px;line-height:20px;text-align:right;overflow:hidden;letter-spacing:-0.45px;">18</div>
<div style="left:506px;top:241px;width:76px;height:20px;background:#d5dfef;"></div>
<div class="t " style="left:506px;top:241px;width:67px;height:20px;line-height:20px;text-align:right;overflow:hidden;letter-spacing:-0.45px;">0</div>
<div style="left:583px;top:241px;width:80px;height:20px;background:#d5dfef;"></div>
<div class="t " style="left:583px;top:241px;width:71px;height:20px;line-height:20px;text-align:right;overflow:hidden;letter-spacing:-0.45px;">4</div>
<div style="left:664px;top:241px;width:74px;height:20px;background:#d5dfef;"></div>
<div class="t " style="left:664px;top:241px;width:65px;height:20px;line-height:20px;text-align:right;overflow:hidden;letter-spacing:-0.45px;">4</div>
<div style="left:739px;top:241px;width:60px;height:20px;background:#d5dfef;"></div>
<div class="t " style="left:739px;top:241px;width:51px;height:20px;line-height:20px;text-align:right;overflow:hidden;letter-spacing:-0.45px;">4</div>
<div style="left:800px;top:241px;width:70px;height:20px;background:#d5dfef;"></div>
<div class="t " style="left:800px;top:241px;width:61px;height:20px;line-height:20px;text-align:right;overflow:hidden;letter-spacing:-0.45px;">2</div>
<div style="left:871px;top:241px;width:57px;height:20px;background:#d5dfef;"></div>
<div class="t " style="left:871px;top:241px;width:48px;height:20px;line-height:20px;text-align:right;overflow:hidden;letter-spacing:-0.45px;">4</div>
<div style="left:929px;top:241px;width:13px;height:20px;background:#d5dfef;"></div>
<div style="left:387px;top:262px;width:52px;height:20px;background:#e9ecf0;"></div>
<div class="t " style="left:388.4px;top:262px;width:50px;height:20px;line-height:20px;overflow:hidden;letter-spacing:-0.312px;">QS01</div>
<div style="left:440px;top:262px;width:65px;height:20px;background:#e9ecf0;"></div>
<div class="t " style="left:440px;top:262px;width:56px;height:20px;line-height:20px;text-align:right;overflow:hidden;letter-spacing:-0.45px;">44</div>
<div style="left:506px;top:262px;width:76px;height:20px;background:#e9ecf0;"></div>
<div class="t " style="left:506px;top:262px;width:67px;height:20px;line-height:20px;text-align:right;overflow:hidden;letter-spacing:-0.45px;">0</div>
<div style="left:583px;top:262px;width:80px;height:20px;background:#e9ecf0;"></div>
<div class="t " style="left:583px;top:262px;width:71px;height:20px;line-height:20px;text-align:right;overflow:hidden;letter-spacing:-0.45px;">21</div>
<div style="left:664px;top:262px;width:74px;height:20px;background:#e9ecf0;"></div>
<div class="t " style="left:664px;top:262px;width:65px;height:20px;line-height:20px;text-align:right;overflow:hidden;letter-spacing:-0.45px;">44</div>
<div style="left:739px;top:262px;width:60px;height:20px;background:#e9ecf0;"></div>
<div class="t " style="left:739px;top:262px;width:51px;height:20px;line-height:20px;text-align:right;overflow:hidden;letter-spacing:-0.45px;">42</div>
<div style="left:800px;top:262px;width:70px;height:20px;background:#e9ecf0;"></div>
<div class="t " style="left:800px;top:262px;width:61px;height:20px;line-height:20px;text-align:right;overflow:hidden;letter-spacing:-0.45px;">37</div>
<div style="left:871px;top:262px;width:57px;height:20px;background:#e9ecf0;"></div>
<div class="t " style="left:871px;top:262px;width:48px;height:20px;line-height:20px;text-align:right;overflow:hidden;letter-spacing:-0.45px;">44</div>
<div style="left:929px;top:262px;width:13px;height:20px;background:#e9ecf0;"></div>
<div style="left:426px;top:179px;width:10px;height:16px;background:#ececec;border:1px solid #a6a6a6"></div>
<svg style="left:427px;top:183px" width="10" height="9" viewBox="0 0 10 9"><rect x="4" y="1.2" width="4.6" height="3.8" fill="#fff" stroke="#111" stroke-width="1.2"/><rect x="1.4" y="3.4" width="4.6" height="3.8" fill="#fff" stroke="#111" stroke-width="1.2"/></svg>
<div style="left:387px;top:283px;width:555px;height:20px;background:#fff944;"></div>
<div style="left:443px;top:291px;width:4px;height:4px;background:#6f6a12;"></div>
<div class="t b" style="left:440px;top:283px;width:58.5px;height:20px;line-height:20px;text-align:right;letter-spacing:0.5px;font-size:14.9px;">78</div>
<div style="left:509px;top:291px;width:4px;height:4px;background:#6f6a12;"></div>
<div class="t b" style="left:506px;top:283px;width:69.5px;height:20px;line-height:20px;text-align:right;letter-spacing:0.5px;font-size:14.9px;">0</div>
<div style="left:586px;top:291px;width:4px;height:4px;background:#6f6a12;"></div>
<div class="t b" style="left:583px;top:283px;width:73.5px;height:20px;line-height:20px;text-align:right;letter-spacing:0.5px;font-size:14.9px;">25</div>
<div style="left:667px;top:291px;width:4px;height:4px;background:#6f6a12;"></div>
<div class="t b" style="left:664px;top:283px;width:67.5px;height:20px;line-height:20px;text-align:right;letter-spacing:0.5px;font-size:14.9px;">48</div>
<div style="left:742px;top:291px;width:4px;height:4px;background:#6f6a12;"></div>
<div class="t b" style="left:739px;top:283px;width:53.5px;height:20px;line-height:20px;text-align:right;letter-spacing:0.5px;font-size:14.9px;">46</div>
<div style="left:803px;top:291px;width:4px;height:4px;background:#6f6a12;"></div>
<div class="t b" style="left:800px;top:283px;width:63.5px;height:20px;line-height:20px;text-align:right;letter-spacing:0.5px;font-size:14.9px;">39</div>
<div style="left:874px;top:291px;width:4px;height:4px;background:#6f6a12;"></div>
<div class="t b" style="left:871px;top:283px;width:50.5px;height:20px;line-height:20px;text-align:right;letter-spacing:0.5px;font-size:14.9px;">49</div>
<div style="left:932px;top:291px;width:4px;height:4px;background:#6f6a12;"></div>
<div style="left:967px;top:91px;width:387px;height:1px;background:#e3e3e3;"></div>
<div style="left:1353px;top:91px;width:1px;height:385px;background:#e3e3e3;"></div>
<div style="left:967px;top:91px;width:1px;height:385px;background:#e9e9e9;"></div>
<div class="btn" style="left:969px;top:94px;width:26px;height:20px"></div>
<svg style="left:969px;top:94px" width="28" height="22" viewBox="0 0 28 22">
<path d="M14,1.5h9.5v11h-6v6.5h-9v-4z" fill="#f7f7f7"/>
<path d="M19,1.5h4.5v11" fill="none" stroke="#4d4d4d" stroke-width="1.2"/>
<rect x="19.5" y="2.6" width="2.6" height="1.8" fill="#8cc63f"/><rect x="19.5" y="5.6" width="2.6" height="1.2" fill="#8cc63f"/><rect x="19.5" y="8" width="2.6" height="1.8" fill="#8cc63f"/><rect x="19.5" y="10.8" width="2.6" height="1.2" fill="#8cc63f"/>
<path d="M8.5,16v3.2h9" fill="none" stroke="#4d4d4d" stroke-width="1.4"/>
<circle cx="12" cy="7.6" r="6" fill="#fff" stroke="#4d4d4d" stroke-width="1.2"/>
<rect x="9" y="6" width="8.6" height="4.8" fill="#8cc63f"/>
<rect x="16" y="6" width="1.6" height="4.8" fill="#6aa83a"/>
<path d="M16.6,12.6l4.9,5" stroke="#5a5a5a" stroke-width="3.4" stroke-linecap="round"/>
</svg>
<div style="left:1001px;top:98px;width:1px;height:13px;background:#949494;"></div>
<div style="left:1002px;top:98px;width:1px;height:13px;background:#fafafa;"></div>
<div class="btn" style="left:1007px;top:94px;width:26px;height:20px"></div>
<svg style="left:1007px;top:94px" width="28" height="22" viewBox="0 0 28 22">
<rect x="10.5" y="1.7" width="7" height="3.8" rx="0.8" fill="#8cc63f" stroke="#3a7a3c" stroke-width="1.1"/>
<rect x="8.5" y="7.5" width="11" height="3.8" rx="1.2" fill="#a9c7e6" stroke="#005d96" stroke-width="1.2"/>
<rect x="5.5" y="13.7" width="17" height="3.8" rx="0.8" fill="#8cc63f" stroke="#3a7a3c" stroke-width="1.1"/>
</svg>
<div class="btn" style="left:1037px;top:94px;width:26px;height:20px"></div>
<svg style="left:1037px;top:94px" width="28" height="22" viewBox="0 0 28 22">
<rect x="5.5" y="1.7" width="17" height="3.8" rx="0.8" fill="#8cc63f" stroke="#3a7a3c" stroke-width="1.1"/>
<rect x="8.5" y="7.5" width="11" height="3.8" rx="1.2" fill="#a9c7e6" stroke="#005d96" stroke-width="1.2"/>
<rect x="10.5" y="13.7" width="7" height="3.8" rx="0.8" fill="#8cc63f" stroke="#3a7a3c" stroke-width="1.1"/>
</svg>
<div class="btn" style="left:1067px;top:94px;width:26px;height:20px"></div>
<svg style="left:1067px;top:94px" width="28" height="22" viewBox="0 0 28 22"><path d="M8.6,1.6h4.1v5h2.6v-5h4.1v3.6l2.7,2v11.9h-6.3v-8.4h-3.6v8.4h-6.3v-11.9l2.7,-2z" fill="#9cbde0" stroke="#00568c" stroke-width="1.4" stroke-linejoin="round"/><path d="M5.9,19.2h6.3M15.8,19.2h6.3" stroke="#00568c" stroke-width="1.6"/></svg>
<div class="btn" style="left:1097px;top:94px;width:26px;height:20px"></div>
<svg style="left:1097px;top:94px" width="28" height="22" viewBox="0 0 28 22"><g transform="translate(-2.6,0)"><path d="M8.6,1.6h4.1v5h2.6v-5h4.1v3.6l2.7,2v11.9h-6.3v-8.4h-3.6v8.4h-6.3v-11.9l2.7,-2z" fill="#c7dbeb" stroke="#76aacb" stroke-width="1.2" stroke-linejoin="round"/></g><circle cx="19" cy="12" r="4.6" fill="#a9b3d8"/><path d="M19,8.6v6.8M15.6,12h6.8" stroke="#fff" stroke-width="2"/></svg>
<div class="btn" style="left:1127px;top:94px;width:36px;height:20px"></div>
<div style="left:1152px;top:95px;width:1px;height:20px;background:#b4b4b4;"></div>
<svg style="left:1127px;top:94px" width="28" height="22" viewBox="0 0 28 22">
<path d="M3.6,1.8h16.6v2.4l-6.8,4.4v8.6h-3.2v-8.6l-6.6,-4.4z" fill="#92b6dc" stroke="#00609a" stroke-width="1.5" stroke-linejoin="miter"/>
<path d="M3.4,2h16.6" stroke="#00609a" stroke-width="2"/>
<circle cx="15.9" cy="10.9" r="2.7" fill="#e8eef4" stroke="#00609a" stroke-width="1.3"/>
</svg>
<svg style="left:1156px;top:106px" width="5" height="5" viewBox="0 0 5 5"><path d="M5,0V5H0Z" fill="#111"/></svg>
<div style="left:1169px;top:98px;width:1px;height:13px;background:#949494;"></div>
<div style="left:1170px;top:98px;width:1px;height:13px;background:#fafafa;"></div>
<div class="btn" style="left:1175px;top:94px;width:36px;height:20px"></div>
<div style="left:1200px;top:95px;width:1px;height:20px;background:#b4b4b4;"></div>
<svg style="left:1175px;top:94px" width="28" height="22" viewBox="0 0 28 22"><g transform="translate(3.4,1.6) scale(0.95,1)"><path d="M0,0H16V6H12V4H7L11,8L7,12H12V10H16V16H0V12.5L4.5,8L0,3.5Z" fill="#7ab929" stroke="#3a7a3c" stroke-width="1.3" stroke-linejoin="miter"/></g></svg>
<svg style="left:1204px;top:106px" width="5" height="5" viewBox="0 0 5 5"><path d="M5,0V5H0Z" fill="#111"/></svg>
<div class="btn" style="left:1215px;top:94px;width:36px;height:20px"></div>
<div style="left:1240px;top:95px;width:1px;height:20px;background:#b4b4b4;"></div>
<svg style="left:1215px;top:94px" width="28" height="22" viewBox="0 0 28 22"><path d="M1.5,19.5C6,16 7,13 10.5,11S16,5 21,1.2" fill="none" stroke="#fff" stroke-width="2.2"/>
<path d="M1.5,19.5C6,16 7,13 10.5,11S16,5 21,1.2" fill="none" stroke="#777" stroke-width="0.9"/>
<rect x="2" y="1.4" width="9.2" height="9.2" rx="1" fill="#fbe7a0" stroke="#f2b27a" stroke-width="0.8"/>
<g transform="translate(2.1,1.4)"><path d="M1.6,1.6H7.4V3.4H6.4V2.8H3.6L5.6,4.6L3.6,6.4H6.4V5.8H7.4V7.6H1.6V6.6L3.6,4.6L1.6,2.6Z" fill="#f2b27a"/></g>
<rect x="12" y="10.2" width="9.2" height="9.4" rx="1" fill="#f0b9a0" stroke="#e59a80" stroke-width="0.8"/>
<g transform="translate(12.1,10.3)"><path d="M1.6,1.6H7.4V3.4H6.4V2.8H3.6L5.6,4.6L3.6,6.4H6.4V5.8H7.4V7.6H1.6V6.6L3.6,4.6L1.6,2.6Z" fill="#e59a80"/></g></svg>
<svg style="left:1244px;top:106px" width="5" height="5" viewBox="0 0 5 5"><path d="M5,0V5H0Z" fill="#b0b0b0"/></svg>
<div style="left:1257px;top:98px;width:1px;height:13px;background:#949494;"></div>
<div style="left:1258px;top:98px;width:1px;height:13px;background:#fafafa;"></div>
<div class="btn" style="left:969px;top:126px;width:26px;height:20px"></div>
<svg style="left:969px;top:126px" width="28" height="22" viewBox="0 0 28 22">
<path d="M8.6,6.4v-4.9h7.6l3.2,3.2v1.7" fill="#fff" stroke="#4d4d4d" stroke-width="1.2"/>
<path d="M16.2,1.5v3.2h3.2" fill="#ddd" stroke="#4d4d4d" stroke-width="1"/>
<rect x="4.7" y="8.6" width="18.6" height="7" rx="1.2" fill="#9dbcdd" stroke="#005a8f" stroke-width="1.4"/>
<rect x="4.7" y="8" width="18.6" height="2" fill="#005a8f"/>
<rect x="19.2" y="11.4" width="2" height="2" fill="#fff"/>
<rect x="6.2" y="17.2" width="14.6" height="2.6" fill="#005a8f"/>
</svg>
<div class="btn" style="left:999px;top:126px;width:35px;height:20px"></div>
<svg style="left:999px;top:126px" width="28" height="22" viewBox="0 0 28 22">
<path d="M13.5,3.6h5l3,3v12.6h-12" fill="#fff" stroke="#4d4d4d" stroke-width="1.3"/>
<path d="M18.3,3.6v3.2h3.2" fill="none" stroke="#4d4d4d" stroke-width="1"/>
<rect x="2.6" y="1.6" width="10" height="15" rx="1.5" fill="#a6c4e4" stroke="#00609a" stroke-width="1.4"/>
<rect x="4" y="3.2" width="4.4" height="1.4" fill="#fff"/><rect x="4" y="6" width="4.4" height="1.2" fill="#fff"/>
<rect x="4" y="8" width="1.6" height="7.6" fill="#c6d9ee"/>
<path d="M7.4,10.3h5.4v-2.8l5.2,4.4l-5.2,4.4v-2.8h-5.4z" fill="#7ab929" stroke="#3a7a3c" stroke-width="1"/>
</svg>
<svg style="left:1027px;top:138px" width="5" height="5" viewBox="0 0 5 5"><path d="M5,0V5H0Z" fill="#111"/></svg>
<div class="btn" style="left:1038px;top:126px;width:26px;height:20px"></div>
<svg style="left:1038px;top:126px" width="28" height="22" viewBox="0 0 28 22"><rect x="4" y="2" width="20" height="16" rx="0.6" fill="#565656"/><rect x="4.9" y="2.9" width="5.2" height="4" fill="#ffd95a"/><rect x="10.9" y="2.9" width="5.2" height="4" fill="#a3c4e6"/><rect x="17.8" y="2.9" width="5.2" height="4" fill="#9bcf63"/><rect x="4.9" y="8" width="5.2" height="4" fill="#f39a1e"/><rect x="10.9" y="8" width="5.2" height="4" fill="#e3b8a8"/><rect x="17.8" y="8" width="5.2" height="4" fill="#ffcc12"/><rect x="4.9" y="13.1" width="5.2" height="4" fill="#f7c6c6"/><rect x="10.9" y="13.1" width="5.2" height="4" fill="#acd89c"/><rect x="17.8" y="13.1" width="5.2" height="4" fill="#8fb8e0"/></svg>
<div style="left:1070px;top:130px;width:1px;height:13px;background:#949494;"></div>
<div style="left:1071px;top:130px;width:1px;height:13px;background:#fafafa;"></div>
<div class="btn" style="left:1076px;top:126px;width:26px;height:20px"></div>
<svg style="left:1076px;top:126px" width="28" height="22" viewBox="0 0 28 22">
<rect x="4.7" y="1.7" width="17.6" height="15.6" fill="#fff" stroke="#0070b8" stroke-width="1.3"/>
<rect x="11.2" y="3.2" width="3.8" height="3.3" fill="#0070b8"/>
<path d="M9.9,8.2h5.1v6.8h1.2v1.1h-6.3v-1.1h1.3v-5.6h-1.3z" fill="#0070b8"/>
</svg>
<div style="left:968px;top:150px;width:385px;height:1px;background:#e3e3e3;"></div>
<div style="left:968px;top:177px;width:385px;height:1px;background:#e3e3e3;"></div>
<div style="left:968px;top:203px;width:385px;height:1px;background:#e3e3e3;"></div>
<div class="t ttl" style="left:970px;top:153px;width:380px;height:23px;line-height:23px;letter-spacing:-0.199px;word-spacing:1.7px;">Number of documents per sales organization (Top 10)</div>
<div style="left:968px;top:179px;width:304px;height:24px;background:#e4e4e4;"></div>
<div class="t " style="left:970.4px;top:179px;width:50px;height:24px;line-height:24px;line-height:25px;overflow:hidden;letter-spacing:0.254px;">SOrg.</div>
<div style="left:1021px;top:179px;width:1px;height:24px;background:#cfcfcf;"></div>
<div class="t " style="left:1023.4px;top:179px;width:124px;height:24px;line-height:24px;line-height:25px;overflow:hidden;letter-spacing:0.204px;">Name</div>
<div style="left:1148px;top:179px;width:1px;height:24px;background:#cfcfcf;"></div>
<div class="t " style="left:1150.4px;top:179px;width:41px;height:24px;line-height:24px;line-height:25px;overflow:hidden;letter-spacing:-0.198px;">Count</div>
<div style="left:1192px;top:179px;width:1px;height:24px;background:#cfcfcf;"></div>
<div class="t " style="left:1194.4px;top:179px;width:76px;height:24px;line-height:24px;line-height:25px;overflow:hidden;letter-spacing:0.002px;">Percentage</div>
<div style="left:968px;top:203px;width:304px;height:106px;background:#dee1e5;"></div>
<div style="left:970px;top:205px;width:50px;height:18px;background:#c6e0ee;"></div>
<div class="t " style="left:970.4px;top:204px;width:50px;height:20px;line-height:20px;overflow:hidden;letter-spacing:-0.312px;">QS01</div>
<div style="left:1022px;top:204px;width:126px;height:20px;background:#e9ecf0;"></div>
<div class="t " style="left:1023.4px;top:204px;width:124px;height:20px;line-height:20px;overflow:hidden;letter-spacing:0.033px;">Verkaufsorg. 0001</div>
<div style="left:1149px;top:204px;width:43px;height:20px;background:#e9ecf0;"></div>
<div class="t " style="left:1149px;top:204px;width:33.5px;height:20px;line-height:20px;text-align:right;overflow:hidden;letter-spacing:-0.45px;">44</div>
<div style="left:1193px;top:204px;width:78px;height:20px;background:#e9ecf0;"></div>
<div class="t " style="left:1193px;top:204px;width:69px;height:20px;line-height:20px;text-align:right;overflow:hidden;letter-spacing:-0.45px;">55,70</div>
<div style="left:969px;top:225px;width:52px;height:20px;background:#d5dfef;"></div>
<div class="t " style="left:970.4px;top:225px;width:50px;height:20px;line-height:20px;overflow:hidden;letter-spacing:-0.324px;">DE01</div>
<div style="left:1022px;top:225px;width:126px;height:20px;background:#d5dfef;"></div>
<div class="t " style="left:1023.4px;top:225px;width:124px;height:20px;line-height:20px;overflow:hidden;letter-spacing:0.033px;">Verkaufsorg. 0001</div>
<div style="left:1149px;top:225px;width:43px;height:20px;background:#d5dfef;"></div>
<div class="t " style="left:1149px;top:225px;width:33.5px;height:20px;line-height:20px;text-align:right;overflow:hidden;letter-spacing:-0.45px;">18</div>
<div style="left:1193px;top:225px;width:78px;height:20px;background:#d5dfef;"></div>
<div class="t " style="left:1193px;top:225px;width:69px;height:20px;line-height:20px;text-align:right;overflow:hidden;letter-spacing:-0.45px;">22,78</div>
<div style="left:969px;top:246px;width:52px;height:20px;background:#e9ecf0;"></div>
<div style="left:1022px;top:246px;width:126px;height:20px;background:#e9ecf0;"></div>
<div style="left:1149px;top:246px;width:43px;height:20px;background:#e9ecf0;"></div>
<div class="t " style="left:1149px;top:246px;width:33.5px;height:20px;line-height:20px;text-align:right;overflow:hidden;letter-spacing:-0.45px;">14</div>
<div style="left:1193px;top:246px;width:78px;height:20px;background:#e9ecf0;"></div>
<div class="t " style="left:1193px;top:246px;width:69px;height:20px;line-height:20px;text-align:right;overflow:hidden;letter-spacing:-0.45px;">17,72</div>
<div style="left:969px;top:267px;width:52px;height:20px;background:#d5dfef;"></div>
<div class="t " style="left:970.4px;top:267px;width:50px;height:20px;line-height:20px;overflow:hidden;letter-spacing:-0.221px;">1000</div>
<div style="left:1022px;top:267px;width:126px;height:20px;background:#d5dfef;"></div>
<div style="left:1149px;top:267px;width:43px;height:20px;background:#d5dfef;"></div>
<div class="t " style="left:1149px;top:267px;width:33.5px;height:20px;line-height:20px;text-align:right;overflow:hidden;letter-spacing:-0.45px;">1</div>
<div style="left:1193px;top:267px;width:78px;height:20px;background:#d5dfef;"></div>
<div class="t " style="left:1193px;top:267px;width:69px;height:20px;line-height:20px;text-align:right;overflow:hidden;letter-spacing:-0.45px;">1,27</div>
<div style="left:969px;top:288px;width:52px;height:20px;background:#e9ecf0;"></div>
<div class="t " style="left:970.4px;top:288px;width:50px;height:20px;line-height:20px;overflow:hidden;letter-spacing:-0.554px;">2000</div>
<div style="left:1022px;top:288px;width:126px;height:20px;background:#e9ecf0;"></div>
<div style="left:1149px;top:288px;width:43px;height:20px;background:#e9ecf0;"></div>
<div class="t " style="left:1149px;top:288px;width:33.5px;height:20px;line-height:20px;text-align:right;overflow:hidden;letter-spacing:-0.45px;">1</div>
<div style="left:1193px;top:288px;width:78px;height:20px;background:#e9ecf0;"></div>
<div class="t " style="left:1193px;top:288px;width:69px;height:20px;line-height:20px;text-align:right;overflow:hidden;letter-spacing:-0.45px;">1,27</div>
</body></html>
